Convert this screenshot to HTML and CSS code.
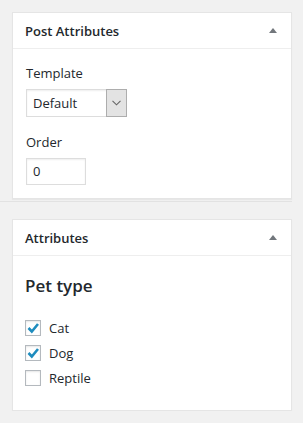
FILE: index.html
```html
<!DOCTYPE html>
<html lang="en">
<head>
    <meta charset="UTF-8">
    <meta name="viewport" content="width=device-width, initial-scale=1.0">
    <title>Post Attributes</title>
    <link rel="stylesheet" href="styles.css">
</head>
<body>

<div class="sortables">
    <!-- Post Attributes box -->
    <div class="postbox">
        <div class="postbox-header">
            <h2>Post Attributes</h2>
            <svg class="toggle" width="8" height="5" viewBox="0 0 8 5"><polygon points="4,0 8,5 0,5" fill="#72777c"/></svg>
        </div>
        <div class="inside">
            <p class="field-label">Template</p>
            <div class="select">
                <span class="select-value">Default</span>
                <span class="select-button">
                    <svg width="9" height="6" viewBox="0 0 9 6"><polyline points="0.5,0.8 4.5,4.8 8.5,0.8" fill="none" stroke="#666" stroke-width="1.1"/></svg>
                </span>
            </div>
            <p class="field-label order-label">Order</p>
            <div class="text-input">0</div>
        </div>
    </div>
</div>

<!-- Attributes box -->
<div class="postbox second">
    <div class="postbox-header">
        <h2>Attributes</h2>
        <svg class="toggle" width="8" height="5" viewBox="0 0 8 5"><polygon points="4,0 8,5 0,5" fill="#72777c"/></svg>
    </div>
    <div class="inside attrs">
        <h3>Pet type</h3>
        <ul class="checklist">
            <li><span class="checkbox checked"><svg width="14" height="14" viewBox="0 0 14 14"><polyline points="2.5,7 5.8,10.5 12,3" fill="none" stroke="#1e8cbe" stroke-width="2.6"/></svg></span>Cat</li>
            <li><span class="checkbox checked"><svg width="14" height="14" viewBox="0 0 14 14"><polyline points="2.5,7 5.8,10.5 12,3" fill="none" stroke="#1e8cbe" stroke-width="2.6"/></svg></span>Dog</li>
            <li><span class="checkbox"></span>Reptile</li>
        </ul>
    </div>
</div>

</body>
</html>
```

FILE: styles.css
```css
body {
    margin: 0;
    background-color: #f1f1f1;
    font-family: "Open Sans", "Noto Sans", sans-serif;
    font-size: 13px;
    color: #23282d;
}
.sortables {
    width: 280px;
    padding: 12px 0 2px 12px;
    border-bottom: 1px solid #e2e2e2;
}
.postbox {
    width: 278px;
    background-color: #fff;
    border: 1px solid #e5e5e5;
    box-shadow: 0 1px 1px rgba(0, 0, 0, 0.04);
}
.postbox.second {
    margin: 17px 0 0 12px;
}
.postbox-header {
    height: 35px;
    display: flex;
    align-items: center;
    justify-content: space-between;
    padding: 0 14px 0 12px;
    border-bottom: 1px solid #eee;
}
.postbox-header h2 {
    margin: 0;
    font-size: 13px;
    font-weight: 600;
}
.inside {
    padding: 14px 12px 13px 13px;
}
.field-label {
    margin: 0;
    line-height: 20px;
}
.order-label {
    margin-top: 15px;
}
.select {
    display: flex;
    width: 99px;
    height: 26px;
    margin-top: 6px;
    border: 1px solid #ddd;
    box-shadow: inset 0 1px 2px rgba(0, 0, 0, 0.07);
}
.select-value {
    flex: 1;
    padding-left: 6px;
    line-height: 26px;
    font-size: 13px;
}
.select-button {
    width: 19px;
    display: flex;
    align-items: center;
    justify-content: center;
    background-color: #e3e3e3;
    border: 1px solid #adadad;
    margin: -1px -1px -1px 0;
}
.text-input {
    width: 52px;
    height: 25px;
    margin-top: 6px;
    padding-left: 6px;
    line-height: 25px;
    border: 1px solid #ddd;
    box-shadow: inset 0 1px 2px rgba(0, 0, 0, 0.07);
}
.attrs {
    padding: 18px 12px 20px 12px;
}
.attrs h3 {
    margin: 0 0 17px;
    font-size: 17px;
    font-weight: 600;
    line-height: 24px;
}
.checklist {
    list-style: none;
    margin: 0;
    padding: 0;
}
.checklist li {
    height: 25px;
    display: flex;
    align-items: center;
    gap: 8px;
}
.checkbox {
    width: 14px;
    height: 14px;
    border: 1px solid #b4b9be;
    box-shadow: inset 0 1px 2px rgba(0, 0, 0, 0.1);
    display: flex;
    align-items: center;
    justify-content: center;
}
```
